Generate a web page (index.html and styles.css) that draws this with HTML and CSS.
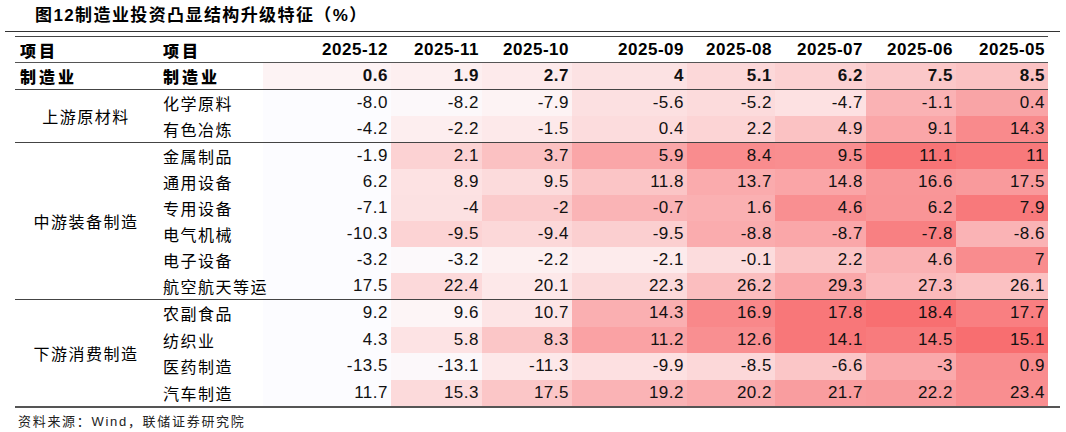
FILE: index.html
```html
<!DOCTYPE html>
<html lang="zh-CN">
<head>
<meta charset="utf-8">
<title>图12制造业投资凸显结构升级特征</title>
<link rel="stylesheet" href="styles.css">
</head>
<body>
<div class="page">
  <div class="title">图12制造业投资凸显结构升级特征（%）</div>
  <div class="frame">
    <table class="data">
      <colgroup>
        <col class="w-cat"><col class="w-sub"><col class="w-12"><col class="w-11"><col class="w-10"><col class="w-09"><col class="w-08"><col class="w-07"><col class="w-06"><col class="w-05">
      </colgroup>
      <thead>
        <tr class="head">
          <th class="lbl">项目</th><th class="lbl">项目</th>
          <th class="yr">2025-12</th><th class="yr">2025-11</th><th class="yr">2025-10</th><th class="yr">2025-09</th><th class="yr">2025-08</th><th class="yr">2025-07</th><th class="yr">2025-06</th><th class="yr">2025-05</th>
        </tr>
      </thead>
      <tbody class="grp">
        <tr class="total">
          <td class="lbl">制造业</td><td class="lbl">制造业</td>
          <td class="num" style="background:#FDF3F4">0.6</td><td class="num" style="background:#FDEFF0">1.9</td><td class="num" style="background:#FDEAEB">2.7</td><td class="num" style="background:#FCE2E3">4</td><td class="num" style="background:#FCD8D9">5.1</td><td class="num" style="background:#FCD1D2">6.2</td><td class="num" style="background:#FBC8C9">7.5</td><td class="num" style="background:#FBC2C3">8.5</td>
        </tr>
      </tbody>
      <tbody class="grp">
        <tr>
          <td class="cat" rowspan="2">上游原材料</td><td class="sub">化学原料</td>
          <td class="num" style="background:#FCFCFF">-8.0</td><td class="num" style="background:#FCF8FA">-8.2</td><td class="num" style="background:#FDF3F4">-7.9</td><td class="num" style="background:#FCE0E1">-5.6</td><td class="num" style="background:#FCDBDC">-5.2</td><td class="num" style="background:#FDE1E2">-4.7</td><td class="num" style="background:#FAB2B4">-1.1</td><td class="num" style="background:#F9A4A6">0.4</td>
        </tr>
        <tr>
          <td class="sub">有色冶炼</td>
          <td class="num" style="background:#FCFCFF">-4.2</td><td class="num" style="background:#FDEEEF">-2.2</td><td class="num" style="background:#FDE9EA">-1.5</td><td class="num" style="background:#FCDCDD">0.4</td><td class="num" style="background:#FCD4D5">2.2</td><td class="num" style="background:#FBC2C3">4.9</td><td class="num" style="background:#FAA6A8">9.1</td><td class="num" style="background:#F98A8C">14.3</td>
        </tr>
      </tbody>
      <tbody class="grp">
        <tr>
          <td class="cat" rowspan="6">中游装备制造</td><td class="sub">金属制品</td>
          <td class="num" style="background:#FCFCFF">-1.9</td><td class="num" style="background:#FCD2D3">2.1</td><td class="num" style="background:#FBC1C2">3.7</td><td class="num" style="background:#FAA6A8">5.9</td><td class="num" style="background:#F98C8E">8.4</td><td class="num" style="background:#F98E90">9.5</td><td class="num" style="background:#F87476">11.1</td><td class="num" style="background:#F8797B">11</td>
        </tr>
        <tr>
          <td class="sub">通用设备</td>
          <td class="num" style="background:#FCFCFF">6.2</td><td class="num" style="background:#FDE2E3">8.9</td><td class="num" style="background:#FCDBDC">9.5</td><td class="num" style="background:#FBC5C6">11.8</td><td class="num" style="background:#FAABAD">13.7</td><td class="num" style="background:#FAA5A7">14.8</td><td class="num" style="background:#F99698">16.6</td><td class="num" style="background:#F99A9C">17.5</td>
        </tr>
        <tr>
          <td class="sub">专用设备</td>
          <td class="num" style="background:#FCFCFF">-7.1</td><td class="num" style="background:#FCE1E2">-4</td><td class="num" style="background:#FBCBCC">-2</td><td class="num" style="background:#FAB4B6">-0.7</td><td class="num" style="background:#FAB0B2">1.6</td><td class="num" style="background:#F98F91">4.6</td><td class="num" style="background:#F99597">6.2</td><td class="num" style="background:#F8797B">7.9</td>
        </tr>
        <tr>
          <td class="sub">电气机械</td>
          <td class="num" style="background:#FCFCFF">-10.3</td><td class="num" style="background:#FCD3D4">-9.5</td><td class="num" style="background:#FCD8D9">-9.4</td><td class="num" style="background:#FBCFD0">-9.5</td><td class="num" style="background:#FAACAE">-8.8</td><td class="num" style="background:#FAA7A9">-8.7</td><td class="num" style="background:#F88082">-7.8</td><td class="num" style="background:#FAB3B5">-8.6</td>
        </tr>
        <tr>
          <td class="sub">电子设备</td>
          <td class="num" style="background:#FCFCFF">-3.2</td><td class="num" style="background:#FCF9FB">-3.2</td><td class="num" style="background:#FDF0F1">-2.2</td><td class="num" style="background:#FDEBEC">-2.1</td><td class="num" style="background:#FCDCDD">-0.1</td><td class="num" style="background:#FBC4C5">2.2</td><td class="num" style="background:#FAB1B3">4.6</td><td class="num" style="background:#F98C8E">7</td>
        </tr>
        <tr>
          <td class="sub">航空航天等运</td>
          <td class="num" style="background:#FCFCFF">17.5</td><td class="num" style="background:#FCD9DA">22.4</td><td class="num" style="background:#FDE8E9">20.1</td><td class="num" style="background:#FCDADB">22.3</td><td class="num" style="background:#FBBEBF">26.2</td><td class="num" style="background:#FAA7A9">29.3</td><td class="num" style="background:#FBB9BB">27.3</td><td class="num" style="background:#FBC1C2">26.1</td>
        </tr>
      </tbody>
      <tbody class="grp last">
        <tr>
          <td class="cat" rowspan="4">下游消费制造</td><td class="sub">农副食品</td>
          <td class="num" style="background:#FCFCFF">9.2</td><td class="num" style="background:#FDF5F6">9.6</td><td class="num" style="background:#FDE5E6">10.7</td><td class="num" style="background:#FAAFB1">14.3</td><td class="num" style="background:#F9888A">16.9</td><td class="num" style="background:#F87779">17.8</td><td class="num" style="background:#F86F71">18.4</td><td class="num" style="background:#F97F81">17.7</td>
        </tr>
        <tr>
          <td class="sub">纺织业</td>
          <td class="num" style="background:#FCFCFF">4.3</td><td class="num" style="background:#FDE3E4">5.8</td><td class="num" style="background:#FBC6C7">8.3</td><td class="num" style="background:#FAA2A4">11.2</td><td class="num" style="background:#F98F91">12.6</td><td class="num" style="background:#F87779">14.1</td><td class="num" style="background:#F87B7D">14.5</td><td class="num" style="background:#F86E70">15.1</td>
        </tr>
        <tr>
          <td class="sub">医药制造</td>
          <td class="num" style="background:#FCFCFF">-13.5</td><td class="num" style="background:#FCF8FA">-13.1</td><td class="num" style="background:#FDE8E9">-11.3</td><td class="num" style="background:#FDE0E1">-9.9</td><td class="num" style="background:#FCD8D9">-8.5</td><td class="num" style="background:#FBC6C7">-6.6</td><td class="num" style="background:#FAA9AB">-3</td><td class="num" style="background:#F98C8E">0.9</td>
        </tr>
        <tr>
          <td class="sub">汽车制造</td>
          <td class="num" style="background:#FCFCFF">11.7</td><td class="num" style="background:#FCDADB">15.3</td><td class="num" style="background:#FBC6C7">17.5</td><td class="num" style="background:#FAB3B5">19.2</td><td class="num" style="background:#FAABAD">20.2</td><td class="num" style="background:#F99D9F">21.7</td><td class="num" style="background:#F99B9D">22.2</td><td class="num" style="background:#F98E90">23.4</td>
        </tr>
      </tbody>
    </table>
    <div class="rule-bottom"></div>
  </div>
  <div class="source">资料来源：Wind，联储证券研究院</div>
</div>
</body>
</html>
```

FILE: styles.css
```css
html, body {
  margin: 0;
  padding: 0;
  background: #ffffff;
}

body {
  font-family: "Liberation Sans", "Noto Sans CJK SC", sans-serif;
  color: #000;
}

.page {
  width: 1066px;
  height: 432px;
  overflow: hidden;
}

.title {
  height: 31px;
  padding-left: 35px;
  font-family: "Liberation Sans", "Noto Sans CJK SC", sans-serif;
  font-weight: 700;
  font-size: 17px;
  line-height: 31px;
  letter-spacing: 1.4px;
  color: #000;
}

.frame {
  margin-left: 5px;
  width: 1055px;
  border-top: 1px solid #333;
  padding-top: 4px;
}

.data {
  margin-left: 10px;
  width: 1033px;
  border-collapse: collapse;
  table-layout: fixed;
  border-top: 1px solid #444;
}

.w-cat { width: 142px; }
.w-sub { width: 106px; }
.w-12 { width: 128px; }
.w-11 { width: 91px; }
.w-10 { width: 90px; }
.w-09 { width: 115px; }
.w-08 { width: 88px; }
.w-07 { width: 91px; }
.w-06 { width: 90px; }
.w-05 { width: 92px; }

.data th,
.data td {
  padding: 0;
  white-space: nowrap;
}

.head th {
  height: 25px;
  border-bottom: 1px solid #555;
  background: #fff;
}

.head .lbl,
.total .lbl {
  text-align: left;
  padding-left: 5px;
  font-family: "Noto Sans CJK SC", sans-serif;
  font-weight: 900;
  font-size: 16px;
  letter-spacing: 3px;
}

.head .lbl + .lbl,
.total .lbl + .lbl {
  padding-left: 6px;
}

.head .yr {
  text-align: right;
  padding-right: 3px;
  font-weight: 700;
  font-size: 17px;
  letter-spacing: 0.5px;
}

.total td {
  height: 26px;
}

.total .num {
  font-weight: 700;
}

.grp {
  border-bottom: 1px solid #444;
}

.grp td {
  height: 26px;
}

.grp.last td {
  height: 26.5px;
}

.grp.last {
  border-bottom: none;
}

.cat {
  text-align: center;
  font-family: "Noto Sans CJK SC", sans-serif;
  font-size: 16px;
  letter-spacing: 1.5px;
  background: #fff;
}

.sub {
  text-align: left;
  padding-left: 6px !important;
  font-family: "Noto Sans CJK SC", sans-serif;
  font-size: 16px;
  letter-spacing: 1.5px;
  background: #fff;
}

.num {
  text-align: right;
  padding-right: 3px !important;
  font-size: 17px;
  letter-spacing: 0.5px;
  color: #111;
}

.rule-bottom {
  margin-left: 10px;
  width: 1045px;
  border-top: 2px solid #555;
}

.source {
  padding-left: 18px;
  margin-top: 6px;
  font-family: "Liberation Sans", "Noto Sans CJK SC", sans-serif;
  font-size: 13px;
  line-height: 16px;
  letter-spacing: 1.7px;
  color: #222;
}
```
